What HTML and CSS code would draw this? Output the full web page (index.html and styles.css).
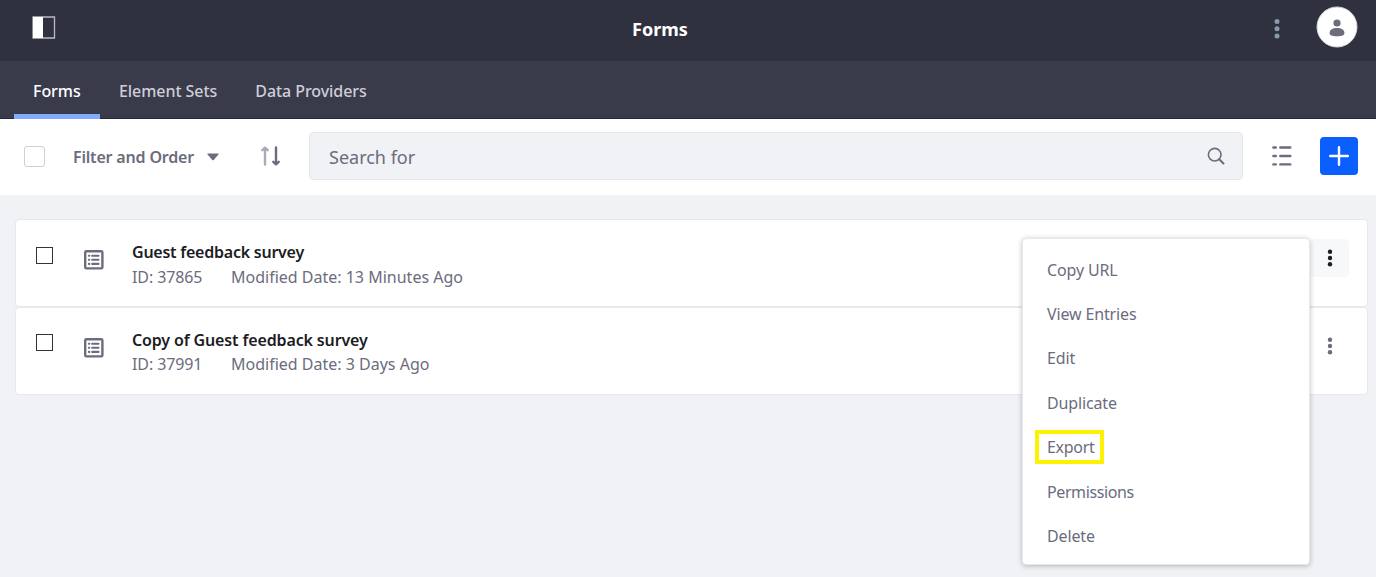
FILE: index.html
```html
<!DOCTYPE html>
<html lang="en">
<head>
<meta charset="utf-8">
<title>Forms</title>
<link rel="stylesheet" href="styles.css">
</head>
<body>
<header class="topbar">
  <svg class="panel-icon" width="24" height="24" viewBox="0 0 24 24"><path d="M1 1h21.500v21H1z" fill="none" stroke="#b9bac6" stroke-width="1.300"/><path d="M1 1h10v21H1z" fill="#fff"/></svg>
  <h1 class="title">Forms</h1>
  <div class="topbar-end">
    <svg class="dots" width="6" height="20" viewBox="0 0 6 20" fill="#869cad"><circle cx="3" cy="2.600" r="2.500"/><circle cx="3" cy="9.800" r="2.500"/><circle cx="3" cy="17" r="2.500"/></svg>
    <svg width="42" height="42" viewBox="0 0 42 42"><circle cx="21" cy="21" r="20" fill="#fff" stroke="#d5d5dc" stroke-width="1"/><circle cx="21" cy="17" r="3.600" fill="#6b6c7e"/><path d="M13.600 27c0-3.200 3-5 7.400-5s7.400 1.800 7.400 5c0 2.400-2 3.200-7.400 3.200s-7.400-.8-7.400-3.200z" fill="#6b6c7e"/></svg>
  </div>
</header>
<nav class="tabs">
  <a class="tab tab-active">Forms</a>
  <a class="tab">Element Sets</a>
  <a class="tab">Data Providers</a>
</nav>
<section class="toolbar">
  <span class="check-all"></span>
  <span class="filter">Filter and Order</span>
  <svg class="caret" width="12" height="8" viewBox="0 0 12 8"><path d="M.9.5h10.200q.9.200.3 1L6.700 7q-.7.700-1.400 0L.6 1.500Q0 .7.900.5z" fill="#6b6c7e"/></svg>
  <svg class="sort" width="22" height="20" viewBox="0 0 22 20" fill="none" stroke-width="2.400" stroke-linecap="round" stroke-linejoin="round"><path d="M5 18.500V2M2.300 4.200 5 1.700l2.700 2.500" stroke="#a7a9bc"/><path d="M16 1.500V18M13.300 15.800l2.700 2.500 2.700-2.500" stroke="#6b6c7e"/></svg>
  <div class="search"><span class="placeholder">Search for</span>
    <svg width="18" height="18" viewBox="0 0 18 18" fill="none" stroke="#6b6c7e" stroke-width="1.600" stroke-linecap="round"><circle cx="7.700" cy="7.700" r="6.300"/><path d="m12.200 12.200 4.300 4.300" stroke-width="2"/></svg>
  </div>
  <svg class="list" width="20" height="20" viewBox="0 0 20 20" stroke="#6b6c7e" stroke-width="2.400" stroke-linecap="round"><path d="M1.400 1.500h2.400M8.300 1.500h10M1.400 10h2.400M8.300 10h10M1.400 18.400h2.400M8.300 18.400h10"/></svg>
  <button class="add"><svg width="20" height="20" viewBox="0 0 20 20" stroke="#fff" stroke-width="2.400" stroke-linecap="round"><path d="M10 1.200v17.600M1.200 10h17.600"/></svg></button>
</section>
<main class="rows">
  <article class="row">
    <span class="box"></span>
    <svg class="form-icon" width="20" height="20" viewBox="0 0 20 20"><rect x="1.200" y="1.200" width="17.200" height="17.200" rx="1.200" fill="none" stroke="#6b6c7e" stroke-width="2.400"/><path d="M4.900 5.700h.4M8.200 5.700h6.300M4.900 9.800h.4M8.200 9.800h6.300M4.900 13.900h.4M8.200 13.900h6.300" stroke="#6b6c7e" stroke-width="2.100" stroke-linecap="round"/></svg>
    <div class="info"><h2 class="name name-short">Guest feedback survey</h2><p class="meta"><span class="id">ID: 37865</span><span>Modified Date: 13 Minutes Ago</span></p></div>
    <button class="more more-open"><svg width="6" height="18" viewBox="0 0 6 18"><circle cx="3" cy="2.700" r="2.200"/><circle cx="3" cy="9" r="2.200"/><circle cx="3" cy="15.300" r="2.200"/></svg></button>
    <ul class="menu">
      <li>Copy URL</li><li>View Entries</li><li>Edit</li><li>Duplicate</li><li><span class="highlight">Export</span></li><li class="tight">Permissions</li><li>Delete</li>
    </ul>
  </article>
  <article class="row row-next">
    <span class="box"></span>
    <svg class="form-icon" width="20" height="20" viewBox="0 0 20 20"><rect x="1.200" y="1.200" width="17.200" height="17.200" rx="1.200" fill="none" stroke="#6b6c7e" stroke-width="2.400"/><path d="M4.900 5.700h.4M8.200 5.700h6.300M4.900 9.800h.4M8.200 9.800h6.300M4.900 13.900h.4M8.200 13.900h6.300" stroke="#6b6c7e" stroke-width="2.100" stroke-linecap="round"/></svg>
    <div class="info"><h2 class="name">Copy of Guest feedback survey</h2><p class="meta"><span class="id">ID: 37991</span><span>Modified Date: 3 Days Ago</span></p></div>
    <button class="more"><svg width="6" height="18" viewBox="0 0 6 18"><circle cx="3" cy="2.700" r="2.200"/><circle cx="3" cy="9" r="2.200"/><circle cx="3" cy="15.300" r="2.200"/></svg></button>
  </article>
</main>
</body>
</html>
```
FILE: styles.css
```css
* { box-sizing: border-box; margin: 0; padding: 0; }
body { height: 577px; overflow: hidden; background: #f1f2f5; font: 16px/24px "Noto Sans", sans-serif; color: #6b6c7e; }
svg { display: block; flex: none; }
button { border: 0; background: none; display: flex; align-items: center; justify-content: center; flex: none; }
.topbar { height: 61px; background: #30313f; display: grid; grid-template-columns: 600px 1fr auto; align-items: start; padding: 0 18px 0 32px; }
.panel-icon { margin-top: 16px; }
.title { margin-top: 17px; font-size: 18px; font-weight: 700; line-height: 24px; color: #fff; }
.topbar-end { display: flex; align-items: center; gap: 36px; padding-top: 6px; }
.dots { margin-top: 4px; }
.tabs { height: 58px; background: #393a4a; border-bottom: 1px solid #272833; display: flex; padding-left: 14px; }
.tab { padding: 18px 19px 0; font-weight: 500; letter-spacing: -.06px; color: #cdced9; white-space: nowrap; }
.tab-active { width: 86px; color: #fff; border-bottom: 5px solid #80acff; margin-bottom: -1px; }
.toolbar { height: 76px; background: #fff; display: flex; align-items: center; padding: 0 18px 2px 24px; }
.check-all { width: 21px; height: 21px; border: 1px solid #cdced9; border-radius: 3px; }
.filter { width: 121px; margin-left: 28px; padding-top: 2px; font-weight: 600; letter-spacing: -.18px; white-space: nowrap; }
.caret { margin: 2px 0 0 13px; }
.sort { margin-left: 41px; }
.search { margin-left: 27px; width: 934px; height: 48px; padding: 0 17px 0 19px; background: #f1f2f5; border: 1px solid #e7e7ed; border-radius: 4px; display: flex; align-items: center; justify-content: space-between; }
.placeholder { padding-top: 2px; font-size: 18px; }
.list { margin-left: 29px; }
.add { width: 38px; height: 38px; margin-left: auto; background: #0b5fff; border-radius: 4px; }
.rows { padding: 24px 8px 0 15px; }
.row { position: relative; height: 88px; background: #fff; border: 1px solid #e7e7ed; border-radius: 4px; display: flex; align-items: flex-start; padding: 0 18px 0 20px; }
.box { width: 17px; height: 17px; margin-top: 27px; border: 1px solid #333; }
.form-icon { margin: 30px 0 0 31px; }
.row-next .box { margin-top: 26px; }
.info { margin: 20px 0 0 28px; flex: 1; white-space: nowrap; }
.name { font-size: 16px; line-height: 24px; font-weight: 600; letter-spacing: -.14px; color: #1c1c24; }
.name-short { letter-spacing: -.24px; }
.meta { display: flex; line-height: 26px; }
.row-next .meta { line-height: 25px; }
.id { width: 99px; letter-spacing: -.1px; }
.more { width: 38px; height: 38px; margin-top: 19px; border-radius: 4px; fill: #6b6c7e; }
.more-open { background: #f7f8f9; fill: #1c1c24; }
.menu { position: absolute; z-index: 2; top: 18px; left: 1006px; width: 288px; height: 327px; padding: 8.600px 24px; background: #fff; border: 1px solid #e7e7ed; border-radius: 4px; box-shadow: 0 1px 5px rgba(39,40,51,.3); letter-spacing: -.14px; list-style: none; }
.menu li { height: 44.400px; line-height: 44.400px; white-space: nowrap; }
.menu .tight { letter-spacing: -.4px; }
.highlight { display: inline-block; width: 69px; height: 34px; margin-left: -12px; padding-left: 8px; border: 4px solid #fff200; line-height: 26px; letter-spacing: -.3px; }
```
